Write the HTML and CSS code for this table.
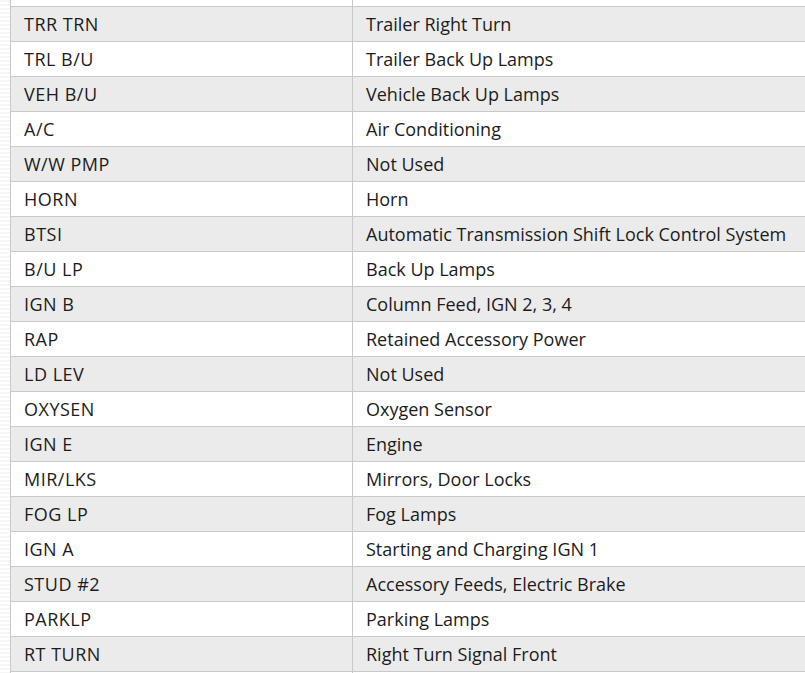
FILE: index.html
```html
<!DOCTYPE html>
<html>
<head>
<meta charset="utf-8">
<link rel="stylesheet" href="styles.css">
</head>
<body>
<div class="page">
<div class="strip"></div>
<table class="fuse-table">
<tbody>
<tr class="odd"><td class="c1">&nbsp;</td><td class="c2">&nbsp;</td></tr>
<tr class="even"><td class="c1">TRR TRN</td><td class="c2">Trailer Right Turn</td></tr>
<tr class="odd"><td class="c1">TRL B/U</td><td class="c2">Trailer Back Up Lamps</td></tr>
<tr class="even"><td class="c1">VEH B/U</td><td class="c2">Vehicle Back Up Lamps</td></tr>
<tr class="odd"><td class="c1">A/C</td><td class="c2">Air Conditioning</td></tr>
<tr class="even"><td class="c1">W/W PMP</td><td class="c2">Not Used</td></tr>
<tr class="odd"><td class="c1">HORN</td><td class="c2">Horn</td></tr>
<tr class="even"><td class="c1">BTSI</td><td class="c2">Automatic Transmission Shift Lock Control System</td></tr>
<tr class="odd"><td class="c1">B/U LP</td><td class="c2">Back Up Lamps</td></tr>
<tr class="even"><td class="c1">IGN B</td><td class="c2">Column Feed, IGN 2, 3, 4</td></tr>
<tr class="odd"><td class="c1">RAP</td><td class="c2">Retained Accessory Power</td></tr>
<tr class="even"><td class="c1">LD LEV</td><td class="c2">Not Used</td></tr>
<tr class="odd"><td class="c1">OXYSEN</td><td class="c2">Oxygen Sensor</td></tr>
<tr class="even"><td class="c1">IGN E</td><td class="c2">Engine</td></tr>
<tr class="odd"><td class="c1">MIR/LKS</td><td class="c2">Mirrors, Door Locks</td></tr>
<tr class="even"><td class="c1">FOG LP</td><td class="c2">Fog Lamps</td></tr>
<tr class="odd"><td class="c1">IGN A</td><td class="c2">Starting and Charging IGN 1</td></tr>
<tr class="even"><td class="c1">STUD #2</td><td class="c2">Accessory Feeds, Electric Brake</td></tr>
<tr class="odd"><td class="c1">PARKLP</td><td class="c2">Parking Lamps</td></tr>
<tr class="even"><td class="c1">RT TURN</td><td class="c2">Right Turn Signal Front</td></tr>
<tr class="odd"><td class="c1">&nbsp;</td><td class="c2">&nbsp;</td></tr>
</tbody>
</table>
</div>
</body>
</html>
```

FILE: styles.css
```css
html, body {
  margin: 0;
  padding: 0;
  background: #ffffff;
  overflow: hidden;
}
.page {
  display: flex;
  height: 673px;
  overflow: hidden;
}
.strip {
  flex: 0 0 10px;
  background: repeating-linear-gradient(180deg, #f6f6f6 0 2px, #ffffff 2px 4px);
}
.fuse-table {
  flex: 0 0 auto;
  width: 830px;
  margin-top: -29px;
  border-collapse: collapse;
  font-family: "Open Sans", "Noto Sans", sans-serif;
  font-size: 18px;
  color: #1c1c1c;
  align-self: flex-start;
}
.fuse-table td {
  height: 34px;
  padding: 0 13px;
  border: 1px solid #c9c9c9;
  vertical-align: middle;
  white-space: nowrap;
  line-height: 20px;
}
.fuse-table .c1 {
  width: 315px;
  letter-spacing: 0.5px;
}
.fuse-table tr.even td {
  background: #ebebeb;
}
.fuse-table tr.odd td {
  background: #ffffff;
}
```
